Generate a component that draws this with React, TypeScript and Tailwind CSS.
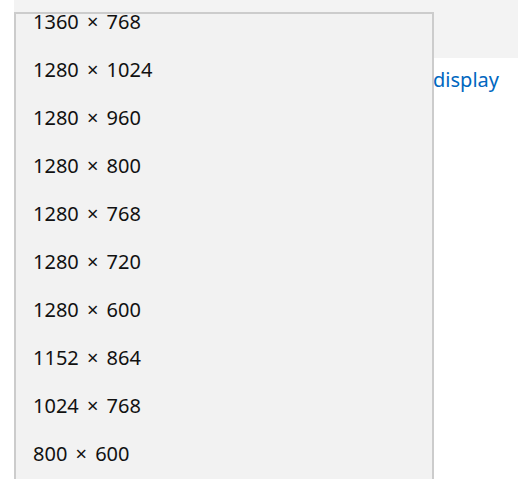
const resolutions = [
  '1360 × 768',
  '1280 × 1024',
  '1280 × 960',
  '1280 × 800',
  '1280 × 768',
  '1280 × 720',
  '1280 × 600',
  '1152 × 864',
  '1024 × 768',
  '800 × 600',
]

function ResolutionMenu() {
  return (
    <div className="absolute left-[14px] top-[12px] h-[520px] w-[420px] overflow-hidden border-2 border-[#cccccc] bg-[#f2f2f2]">
      <ul className="-mt-[16px] flex flex-col">
        {resolutions.map((r) => (
          <li
            key={r}
            className="flex h-[48px] items-center pl-[17px] text-[20px] text-[#111111] [word-spacing:3px]"
          >
            {r}
          </li>
        ))}
      </ul>
    </div>
  )
}

export default function App() {
  return (
    <div
      className="relative h-[479px] w-full overflow-hidden bg-white"
      style={{ fontFamily: '"Noto Sans", "Open Sans", sans-serif' }}
    >
      <div className="ml-[14px] h-[58px] bg-[#f3f3f3]" />
      <div className="flex justify-end pr-[19px] pt-[8px]">
        <a className="text-[20px] leading-[28px] text-[#0067c0]">Detect other display</a>
      </div>
      <ResolutionMenu />
    </div>
  )
}
